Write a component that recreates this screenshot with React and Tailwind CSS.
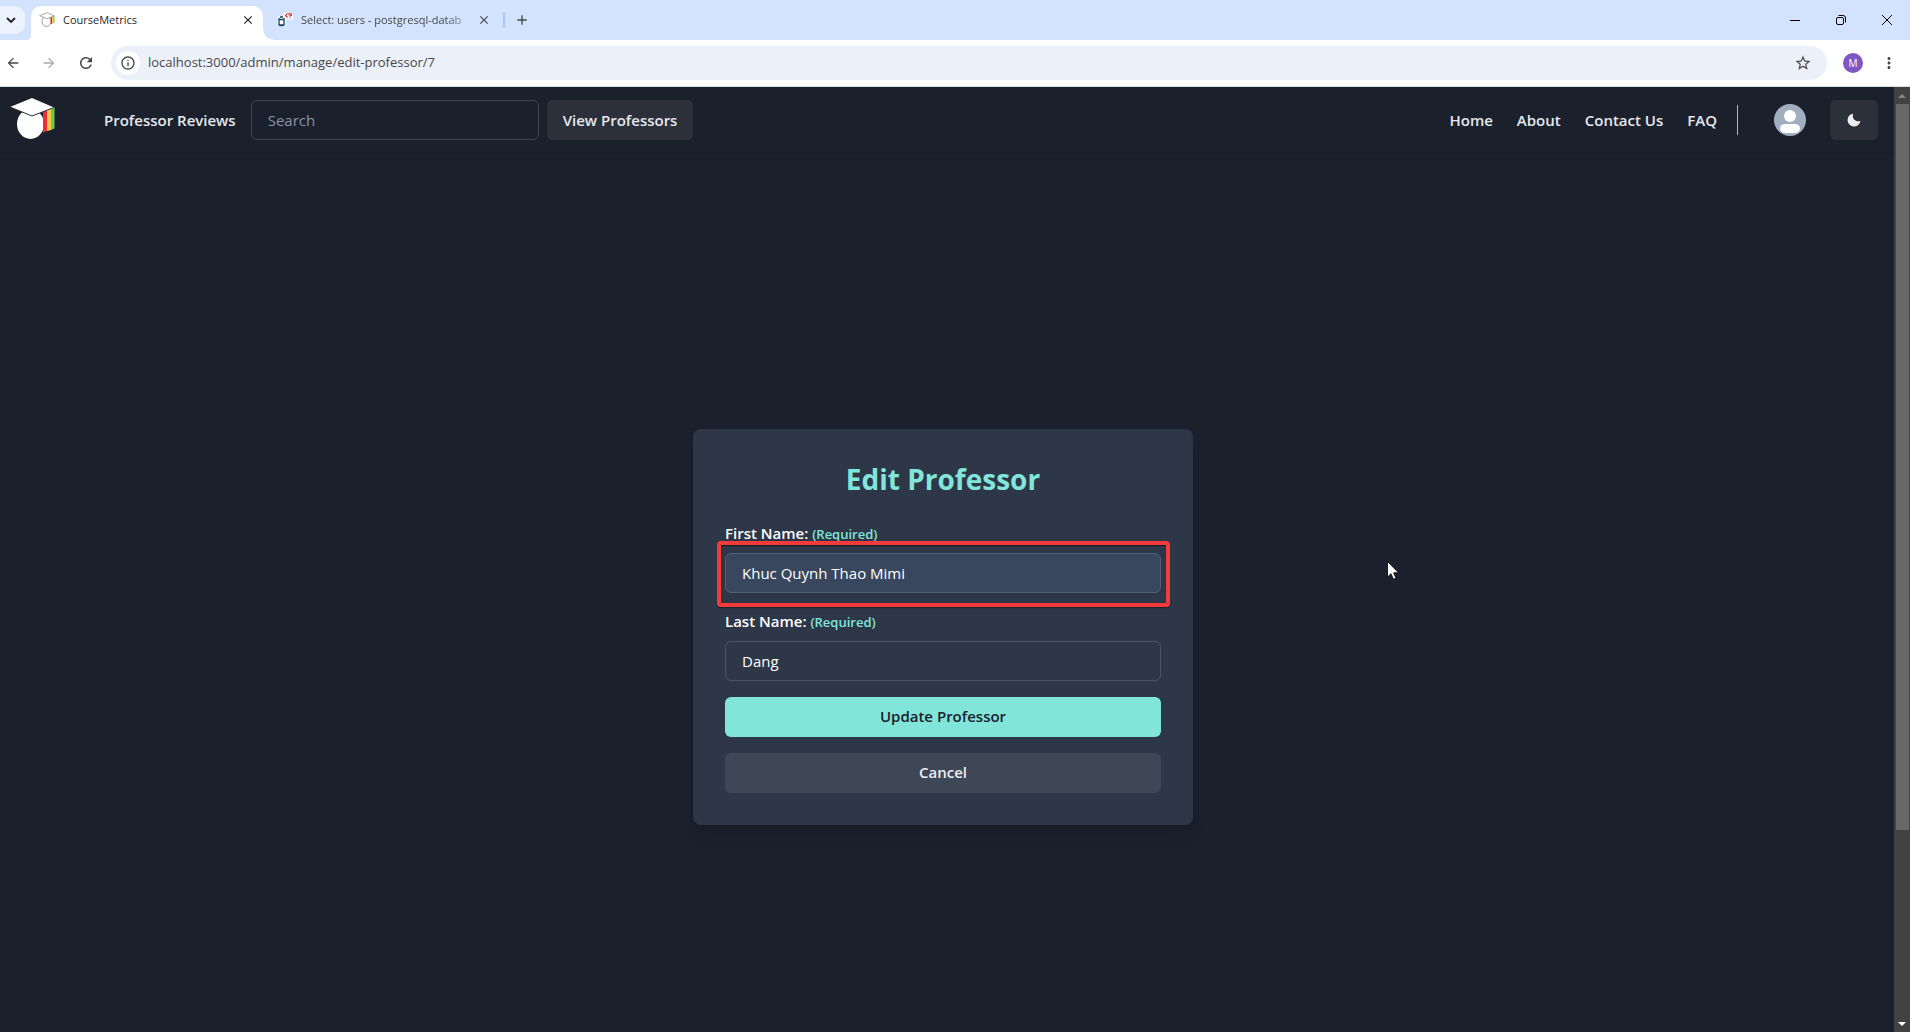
import React from "react";
import { MdArrowBack, MdArrowForward, MdRefresh, MdOutlineInfo, MdStarBorder, MdMoreVert, MdClose, MdAdd } from "react-icons/md";

function CapLogo({ className, outline }) {
  const plain = outline === "none";
  return (
    <svg viewBox="0 0 48 48" className={className} aria-hidden="true">
      <ellipse cx="22.500" cy="28" rx="13.500" ry="15" fill="#fff" stroke={outline} strokeWidth={plain ? 0 : 3} />
      <path d="M35 16 L39 14 V35 L35 36.500 Z" fill="#ed2f33" />
      <path d="M39 14 L43 12.500 V34 L39 35 Z" fill="#f5c84c" />
      <path d="M43 12.500 L46.500 11 V32.500 L43 34 Z" fill="#6cc94f" />
      <path d="M2 11 L24 2 L46 11.500 L24 20 Z" fill="#fff" stroke={plain ? "none" : outline} strokeWidth="2.500" />
      <path d="M2 11 L24 20 L46 11.500" fill="none" stroke={plain ? "#2b2f36" : "none"} strokeWidth="1" />
    </svg>
  );
}

function DatabaseIcon() {
  return (
    <svg viewBox="0 0 16 16" className="size-4 shrink-0" aria-hidden="true">
      <path d="M.5 4.500 H6 L7 1 H16 V7.500 H8.500 V14.500 H.5 Z" fill="#fff" />
      <path d="M2 6 V13 H7 V6 M2 7.500 H7 M3 5 H6 M2.500 13.500 H6.500" fill="none" stroke="#11465c" strokeWidth="1.300" />
      <path d="M10.500 1.500 L8.500 3.500 L10.500 5.500 M11.700 2.800 V1.800 H14.300 V3.500 H13 V4.700 M13 5.500 V6.500" fill="none" stroke="#e02020" strokeWidth="1.100" />
    </svg>
  );
}

function MoonIcon() {
  return (
    <svg viewBox="0 0 24 24" className="size-3.5" fill="currentColor" aria-hidden="true">
      <path d="M21.400 13.700C20.600 13.900 19.800 14 19 14c-5 0-9-4-9-9c0-.8.1-1.600.3-2.400c.1-.3 0-.7-.3-1c-.3-.3-.6-.4-1-.3C4.300 2.700 1 7.100 1 12c0 6.100 4.900 11 11 11c4.900 0 9.300-3.300 10.600-8.100c.1-.3 0-.7-.3-1C22.100 13.700 21.700 13.600 21.400 13.700z" />
    </svg>
  );
}

function TitleStrip() {
  return (
    <div className="flex h-10 items-end bg-[#d3e3fd] text-[11px] text-[#1f1f1f]">
      <button aria-label="Search tabs" className="mb-1.5 flex h-7 w-[25px] items-center justify-center rounded-r-[10px] bg-[#ecf3fe]">
        <svg viewBox="0 0 10 10" className="mr-1 size-2.5" fill="none" stroke="currentColor" strokeWidth="1.800" aria-hidden="true"><path d="M1 3 L5 7 L9 3" /></svg>
      </button>
      <div className="flex h-[34px] items-end">
        <span className="size-1.5 bg-[radial-gradient(circle_at_0_0,transparent_6px,#fff_7px)]" />
        <div className="flex h-full w-[232px] items-center rounded-t-[10px] bg-white pr-2 pb-1.5 pl-2">
          <CapLogo className="mr-2 size-4" outline="#9a9a9a" />
          <span className="flex-1">CourseMetrics</span>
          <button aria-label="Close CourseMetrics"><MdClose className="size-3.5" /></button>
        </div>
        <span className="size-2.5 bg-[radial-gradient(circle_at_100%_0,transparent_9px,#fff_10px)]" />
      </div>
      <div className="flex h-[34px] w-[232px] items-center pb-1.5 pl-1 text-[#474747]">
        <DatabaseIcon />
        <span className="ml-2 w-[170px] whitespace-nowrap [mask-image:linear-gradient(to_right,#000_85%,#0003)]">Select: users - postgresql-datab</span>
        <button aria-label="Close Select: users" className="ml-1.5"><MdClose className="size-3.5" /></button>
        <span className="ml-auto h-4 w-0.5 bg-[#a8c7fa]" />
      </div>
      <button aria-label="New tab" className="flex h-[34px] w-[34px] items-center justify-center pb-1.5 text-[#474747]"><MdAdd className="size-4" /></button>
      <div className="ml-auto flex h-10 text-black">
        <button aria-label="Minimize" className="flex w-[46px] items-center justify-center">
          <svg viewBox="0 0 10 10" className="size-2.5" stroke="currentColor" aria-hidden="true"><path d="M0 5.500 H10" /></svg>
        </button>
        <button aria-label="Restore" className="flex w-[46px] items-center justify-center">
          <svg viewBox="0 0 10 10" className="size-2.5" fill="none" stroke="currentColor" aria-hidden="true"><rect x=".5" y="2.500" width="7" height="7" rx="1.500" /><path d="M2.500 .5 H7 Q9.500 .5 9.500 3 V7.500" /></svg>
        </button>
        <button aria-label="Close window" className="flex w-[46px] items-center justify-center">
          <svg viewBox="0 0 10 10" className="size-2.5" stroke="currentColor" aria-hidden="true"><path d="M0 0 L10 10 M10 0 L0 10" /></svg>
        </button>
      </div>
    </div>
  );
}

function Toolbar() {
  return (
    <div className="flex h-[47px] items-center border-b border-[#dcdcdc] bg-white pr-3 pl-[5px] text-[#474747]">
      <button aria-label="Back" className="mr-5"><MdArrowBack className="size-4" /></button>
      <button aria-label="Forward" className="mr-5 text-[#ababab]"><MdArrowForward className="size-4" /></button>
      <button aria-label="Reload" className="mr-4"><MdRefresh className="size-[18px]" /></button>
      <div className="flex h-[34px] flex-1 items-center rounded-full bg-[#ecf0f9] pr-[15px] pl-[5px]">
        <button aria-label="View site information" className="mr-2 flex size-6 items-center justify-center rounded-full bg-white"><MdOutlineInfo className="size-4" /></button>
        <input aria-label="Address" defaultValue="localhost:3000/admin/manage/edit-professor/7" className="flex-1 bg-transparent text-[13px] outline-none" />
        <button aria-label="Bookmark this tab"><MdStarBorder className="size-[18px]" /></button>
      </div>
      <button aria-label="Profile M" className="mr-[17px] ml-4 flex size-5 items-center justify-center rounded-full bg-[#7e57c2] text-[10px] text-white">M</button>
      <button aria-label="Menu"><MdMoreVert className="size-[18px]" /></button>
    </div>
  );
}

function NavBar() {
  return (
    <nav className="flex h-[67px] shrink-0 items-center border-b border-[#171923] pr-4 pl-2 text-[15px] font-semibold text-[#e6e8ec]">
      <a href="#home" aria-label="CourseMetrics" className="mr-12"><CapLogo className="size-12" outline="none" /></a>
      <a href="#reviews" className="mr-[15px]">Professor Reviews</a>
      <input aria-label="Search" placeholder="Search" className="h-10 w-72 rounded-md border border-[#3f444e] px-4 font-normal outline-none placeholder:text-[#8b93a1]" />
      <button className="ml-2 h-10 rounded-md bg-[#2c303b] px-4">View Professors</button>
      <div className="ml-auto flex items-center gap-6">
        <a href="#home">Home</a>
        <a href="#about">About</a>
        <a href="#contact">Contact Us</a>
        <a href="#faq">FAQ</a>
      </div>
      <span className="mr-9 ml-5 h-[30px] w-px bg-[#b0b5bd]" />
      <button aria-label="Account" className="mr-6">
        <svg viewBox="0 0 32 32" className="size-8" aria-hidden="true"><circle cx="16" cy="16" r="16" fill="#a0aec0" /><circle cx="16" cy="12" r="6" fill="#fff" /><rect x="6" y="20" width="20" height="9" rx="5" fill="#fff" /></svg>
      </button>
      <button aria-label="Toggle color mode" className="flex h-10 w-12 items-center justify-center rounded-md bg-[#2c303b] text-[#eeeeef]"><MoonIcon /></button>
    </nav>
  );
}

function Field({ id, label, value, inputClass, children }) {
  return (
    <div className="mb-4">
      <label htmlFor={id} className="mb-2 block text-[15px] leading-6 font-semibold">
        {label} <span className="text-[13px] leading-none text-[#81e6d9]">(Required)</span>
      </label>
      <div className="relative">
        <input id={id} defaultValue={value} className={"block h-10 w-full rounded-md border px-4 text-[15px] outline-none " + inputClass} />
        {children}
      </div>
    </div>
  );
}

function EditForm() {
  return (
    <form className="w-[500px] rounded-lg bg-[#2d3748] p-8 text-white shadow-lg" onSubmit={(e) => e.preventDefault()}>
      <h1 className="mb-6 text-center text-[28px] leading-9 font-bold text-[#81e6d9]">Edit Professor</h1>
      <Field id="first" label="First Name:" value="Khuc Quynh Thao Mimi" inputClass="border-[#52617a] bg-[#38475e]">
        <span className="pointer-events-none absolute -top-3 -right-[9px] -bottom-3.5 -left-2 rounded border-4 border-[#f43b3b] shadow-[0_1px_1px_#0006,inset_0_1px_1px_#0008]" />
      </Field>
      <Field id="last" label="Last Name:" value="Dang" inputClass="border-[#4a5361] bg-transparent" />
      <button className="mb-4 h-10 w-full rounded-md bg-[#81e6d9] text-[15px] font-semibold text-[#1a202c]">Update Professor</button>
      <button type="button" className="block h-10 w-full rounded-md bg-[#3e4756] text-[15px] font-semibold text-[#eeeeef]">Cancel</button>
    </form>
  );
}

function ScrollBar() {
  return (
    <div className="flex w-4 flex-col bg-[#424242]">
      <span className="flex h-[17px] items-center justify-center">
        <svg viewBox="0 0 8 4" className="h-1 w-2" fill="#868686" aria-hidden="true"><path d="M0 4 L4 0 L8 4 Z" /></svg>
      </span>
      <div className="flex flex-1 flex-col pr-px pl-0.5"><span className="h-51/64 bg-[#686868]" /></div>
      <span className="flex h-[17px] items-center justify-center">
        <svg viewBox="0 0 8 4" className="h-1 w-2" fill="#fff" aria-hidden="true"><path d="M0 0 L4 4 L8 0 Z" /></svg>
      </span>
    </div>
  );
}

export default function App() {
  return (
    <div className="relative flex h-screen flex-col overflow-hidden font-['Open_Sans','Noto_Sans',sans-serif]">
      <TitleStrip />
      <Toolbar />
      <div className="flex min-h-0 flex-1">
        <div className="flex flex-1 flex-col overflow-hidden bg-[#1a202c]">
          <NavBar />
          <main className="flex h-full shrink-0 items-center justify-center pr-2"><EditForm /></main>
        </div>
        <ScrollBar />
      </div>
      <svg viewBox="0 0 12 19" className="pointer-events-none absolute top-[561px] left-[1387px] h-[19px] w-3" aria-hidden="true">
        <path d="M.5 .5 V16 L4 12.700 L6.500 18.300 L9 17.200 L6.600 11.800 H11.500 Z" fill="#fff" stroke="#000" strokeWidth=".8" />
      </svg>
    </div>
  );
}
